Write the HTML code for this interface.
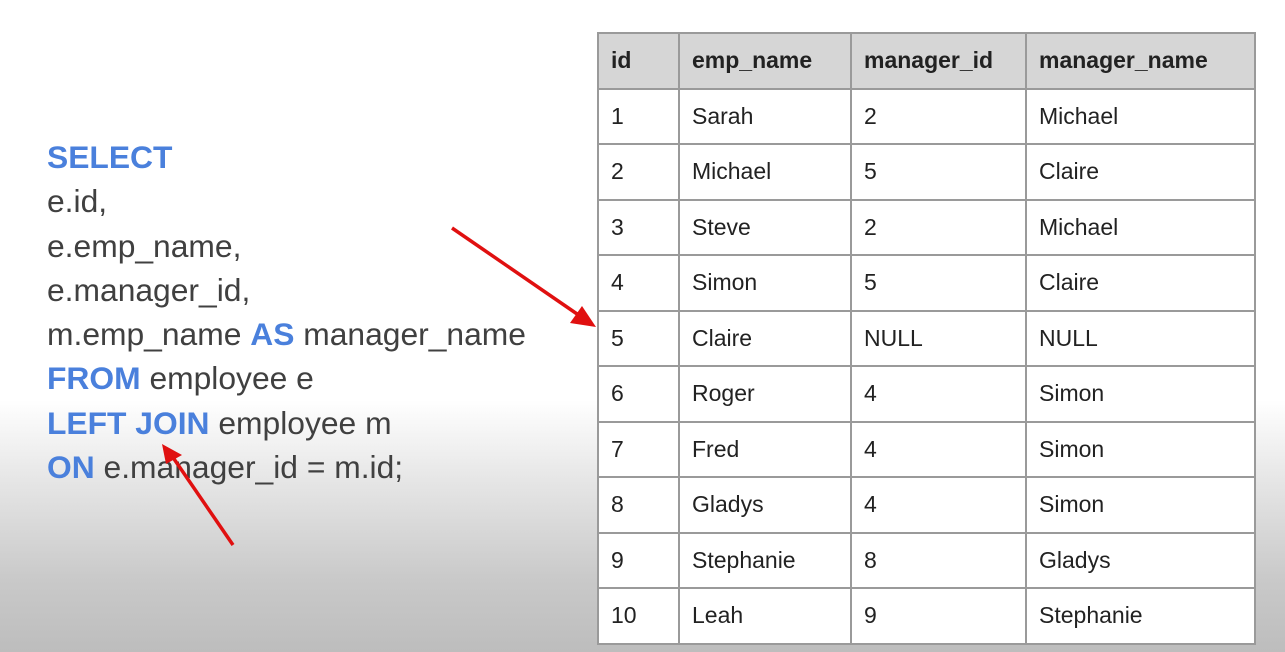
<!DOCTYPE html>
<html><head><style>
body{margin:0;width:1285px;height:652px;overflow:hidden;font-family:"Liberation Sans",sans-serif;
background:linear-gradient(to bottom,#fff 0px,#fff 400px,#e6e6e6 480px,#c9c9c9 580px,#bdbdbd 652px);position:relative}
.code{position:absolute;left:47px;top:135px;font-size:31.8px;line-height:44.3px;color:#404040;white-space:pre}
.k{color:#4a80dc;font-weight:bold}
table{position:absolute;left:597px;top:32px;width:657px;border-collapse:collapse;table-layout:fixed;font-family:"Liberation Sans",sans-serif;font-size:23px;color:#222}
td,th{border:2px solid #9a9a9a;height:51.5px;padding:0 0 0 12px;text-align:left;background:#fff;box-sizing:border-box;overflow:hidden;white-space:nowrap}
tr{height:55.5px}
th{background:#d6d6d6;font-weight:bold}
</style></head><body>
<div class="code"><span class="k">SELECT</span>
e.id,
e.emp_name,
e.manager_id,
m.emp_name <span class="k">AS</span> manager_name
<span class="k">FROM</span> employee e
<span class="k">LEFT JOIN</span> employee m
<span class="k">ON</span> e.manager_id = m.id;</div>
<table>
<colgroup><col style="width:81px"><col style="width:172px"><col style="width:175px"><col style="width:229px"></colgroup>
<tr><th>id</th><th>emp_name</th><th>manager_id</th><th>manager_name</th></tr>
<tr><td>1</td><td>Sarah</td><td>2</td><td>Michael</td></tr>
<tr><td>2</td><td>Michael</td><td>5</td><td>Claire</td></tr>
<tr><td>3</td><td>Steve</td><td>2</td><td>Michael</td></tr>
<tr><td>4</td><td>Simon</td><td>5</td><td>Claire</td></tr>
<tr><td>5</td><td>Claire</td><td>NULL</td><td>NULL</td></tr>
<tr><td>6</td><td>Roger</td><td>4</td><td>Simon</td></tr>
<tr><td>7</td><td>Fred</td><td>4</td><td>Simon</td></tr>
<tr><td>8</td><td>Gladys</td><td>4</td><td>Simon</td></tr>
<tr><td>9</td><td>Stephanie</td><td>8</td><td>Gladys</td></tr>
<tr><td>10</td><td>Leah</td><td>9</td><td>Stephanie</td></tr>
</table>
<svg width="1285" height="652" style="position:absolute;left:0;top:0">
<line x1="452" y1="228" x2="580" y2="316" stroke="#e01010" stroke-width="3.5"/>
<polygon points="596,327 570,323 582,306" fill="#e01010"/>
<line x1="233" y1="545" x2="172" y2="456" stroke="#e01010" stroke-width="3.5"/>
<polygon points="162,444 182,455 166,464" fill="#e01010"/>
</svg>
</body></html>
